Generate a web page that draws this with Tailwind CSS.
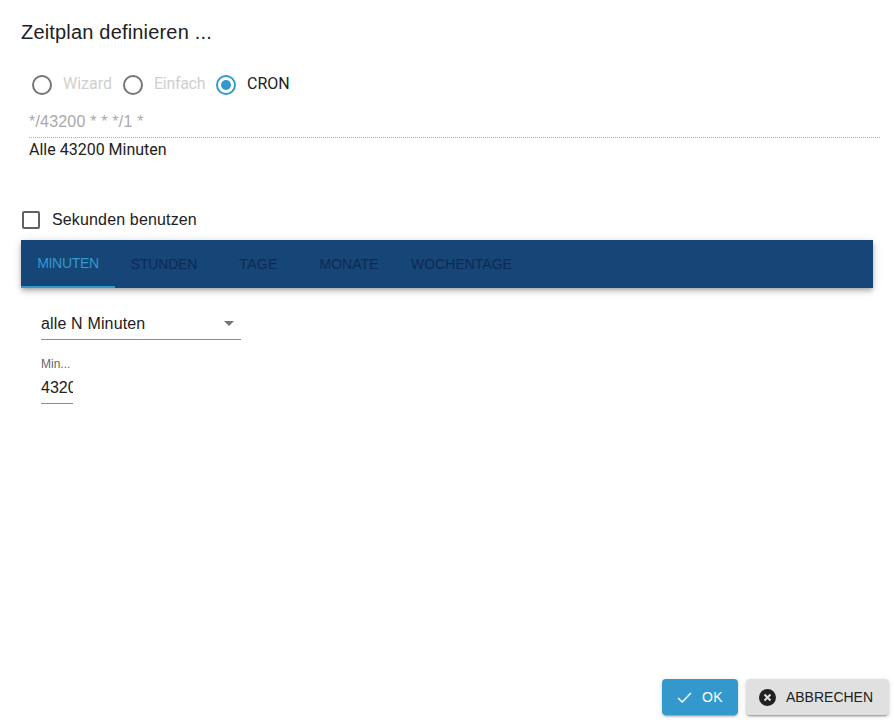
<!DOCTYPE html>
<html lang="de">
<head>
  <meta charset="UTF-8">
  <title>Zeitplan definieren</title>
  <script src="https://cdn.jsdelivr.net/npm/@tailwindcss/browser@4"></script>
</head>
<body class="bg-white h-[723px] w-[894px] overflow-hidden font-['Liberation_Sans',sans-serif] text-[#212121] flex flex-col">
  <h2 class="text-[20px] leading-[24px] tracking-[0.18px] pl-[21px] pt-[20px]">Zeitplan definieren ...</h2>

  <!-- modus -->
  <div class="flex items-center pl-[32px] mt-[26px] h-[28px] text-[16px] font-['Roboto',sans-serif]">
    <span class="w-[20px] h-[20px] translate-y-[1px] rounded-full border-2 border-[#757575]"></span>
    <span class="ml-[11px] w-[49px] text-[#cfcfcf]">Wizard</span>
    <span class="ml-[11px] w-[20px] h-[20px] translate-y-[1px] rounded-full border-2 border-[#757575]"></span>
    <span class="ml-[11px] w-[51px] text-[#cfcfcf] tracking-[-0.3px]">Einfach</span>
    <span class="ml-[11px] w-[20px] h-[20px] translate-y-[1px] rounded-full border-2 border-[#3399cc] flex items-center justify-center"><span class="w-[10px] h-[10px] rounded-full bg-[#3399cc]"></span></span>
    <span class="ml-[11px]">CRON</span>
  </div>

  <div class="ml-[29px] mr-[14px] mt-[14px] h-[26px] border-b border-dotted border-[#b0b0b0] text-[16px] leading-[20px] tracking-[0.2px] text-[#a9a9a9]">*/43200 * * */1 *</div>
  <div class="ml-[29px] mt-[2px] text-[16px] leading-[20px] font-['Roboto',sans-serif]">Alle 43200 Minuten</div>

  <label class="flex items-center ml-[22px] mt-[49px] h-[22px]">
    <span class="w-[18px] h-[18px] rounded-[2px] border-2 border-[#616161]"></span>
    <span class="ml-[12px] text-[16px] tracking-[0.15px]">Sekunden benutzen</span>
  </label>

  <!-- tabs -->
  <div class="ml-[21px] mr-[21px] mt-[9px] h-[48px] bg-[#164577] flex text-[14px] text-[#0f2a55] shadow-[0_2px_4px_-1px_rgba(0,0,0,0.2),0_4px_5px_0_rgba(0,0,0,0.14),0_1px_10px_0_rgba(0,0,0,0.12)]">
    <div class="w-[94px] flex items-center justify-center text-[#3399cc] tracking-[-0.3px] border-b-2 border-[#3399cc]">MINUTEN</div>
    <div class="w-[98px] flex items-center justify-center tracking-[-0.2px]">STUNDEN</div>
    <div class="w-[90px] flex items-center justify-center tracking-[0.3px] pl-[1px]">TAGE</div>
    <div class="w-[92px] flex items-center justify-center">MONATE</div>
    <div class="w-[133px] flex items-center justify-center">WOCHENTAGE</div>
  </div>

  <!-- inhalt -->
  <div class="ml-[41px] mt-[20px] w-[200px] h-[32px] border-b border-[#8c8c8c] flex items-center justify-between text-[16px] tracking-[0.15px]">
    <span>alle N Minuten</span>
    <svg class="mr-[7px]" width="10" height="5" viewBox="0 0 10 5"><path d="M0 0h10L5 5z" fill="#757575"/></svg>
  </div>
  <div class="ml-[41px] mt-[17px] w-[32px]">
    <div class="text-[12px] leading-[14px] text-[#666666]">Min...</div>
    <div class="mt-[5px] h-[28px] border-b border-[#8c8c8c] text-[16px] leading-[24px] overflow-hidden whitespace-nowrap">43200</div>
  </div>

  <!-- buttons -->
  <div class="mt-auto mb-[8px] flex justify-end gap-[8px] pr-[5px] text-[14px]">
    <button class="w-[76px] h-[36px] rounded bg-[#3399cc] text-white flex items-center justify-center gap-[10px] tracking-[0.3px] shadow-[0_3px_1px_-2px_rgba(0,0,0,0.2),0_2px_2px_0_rgba(0,0,0,0.14),0_1px_5px_0_rgba(0,0,0,0.12)]">
      <svg width="15" height="11" viewBox="0 0 16 12"><path d="M1 6.5l4.5 4.5L15 1" fill="none" stroke="#fff" stroke-width="1.5"/></svg>
      <span>OK</span>
    </button>
    <button class="w-[143px] h-[36px] rounded bg-[#e0e0e0] text-[#212121] flex items-center justify-center gap-[10px] pr-[3px] shadow-[0_3px_1px_-2px_rgba(0,0,0,0.2),0_2px_2px_0_rgba(0,0,0,0.14),0_1px_5px_0_rgba(0,0,0,0.12)]">
      <svg width="17" height="17" viewBox="0 0 17 17"><circle cx="8.5" cy="8.5" r="8.5" fill="#212121"/><path d="M5.5 5.5l6 6M11.5 5.5l-6 6" stroke="#e0e0e0" stroke-width="2"/></svg>
      <span>ABBRECHEN</span>
    </button>
  </div>
</body>
</html>
